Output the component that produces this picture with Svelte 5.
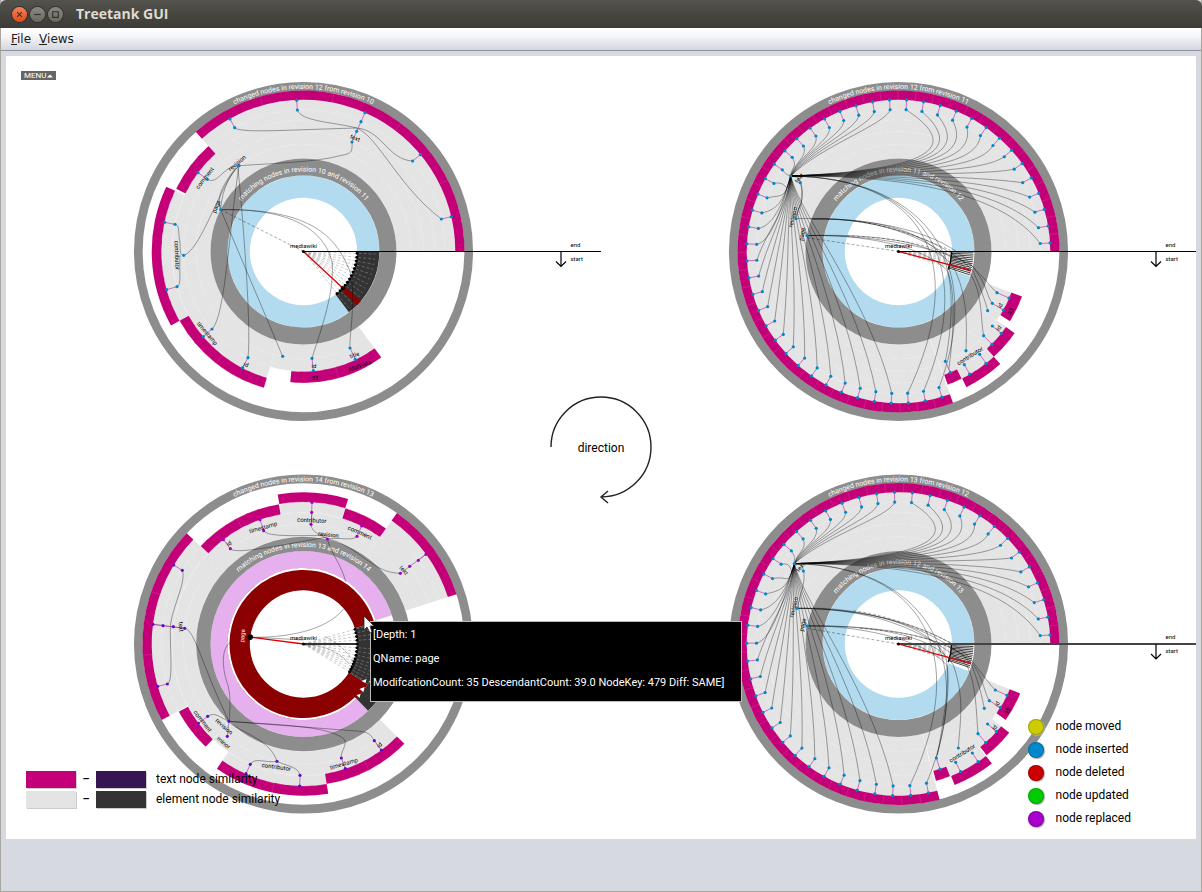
<script>
  const R = (k) => Math.sqrt(2880 * k);
  const rad = (a) => (a * Math.PI) / 180;
  const pt = (r, a) => [r * Math.cos(rad(a)), r * Math.sin(rad(a))];
  const f = (n) => n.toFixed(2);

  function sector(r0, r1, a0, a1) {
    const large = a1 - a0 > 180 ? 1 : 0;
    const [ax, ay] = pt(r1, a0);
    const [bx, by] = pt(r1, a1);
    const [cx, cy] = pt(r0, a1);
    const [dx, dy] = pt(r0, a0);
    return `M${f(ax)},${f(ay)}A${f(r1)},${f(r1)} 0 ${large} 1 ${f(bx)},${f(by)}L${f(cx)},${f(cy)}A${f(r0)},${f(r0)} 0 ${large} 0 ${f(dx)},${f(dy)}Z`;
  }

  function arc(r, a0, a1) {
    const [ax, ay] = pt(r, a0);
    const [bx, by] = pt(r, a1);
    return `M${f(ax)},${f(ay)}A${r},${r} 0 ${a1 - a0 > 180 ? 1 : 0} 1 ${f(bx)},${f(by)}`;
  }

  // Chart drawings are plotted on a grid three times finer than the view box.
  const at = (x, y, c) => [(x - 535.5) / 3, (y - c) / 3];
  const path = (d, c) =>
    d.replace(/(-?[\d.]+),(-?[\d.]+)/g, (_, x, y) => {
      const [px, py] = at(+x, +y, c);
      return `${f(px)},${f(py)}`;
    });

  const MAG = '#c40078';
  const GREY = '#e4e4e4';
  const DARK = '#333333';
  const BLUE = '#b2dbef';

  function fan(hub, c, step, count, base) {
    const lines = [];
    const stems = [];
    const dots = [];
    const hx = hub[0];
    const hy = hub[1];
    for (let i = 0; i < count; i++) {
      const a = base - step * (i + 0.5);
      const inner = pt(R(7), a);
      const outer = pt(R(8), a);
      const x = inner[0] * 3 + 535.5;
      const y = inner[1] * 3 + c;
      dots.push(inner, outer);
      stems.push([...inner, ...outer]);
      let c1, c2;
      if (a > 270) {
        const t = (a - 270) / 90;
        c1 = [720 + 130 * t, hy - 95 + 150 * t];
        c2 = [650 - 90 * t, hy - 20 + 20 * t];
      } else if (a > 180) {
        if (y < hy) {
          const q = pt(R(6) - 4, a);
          c1 = [q[0] * 3 + 520, q[1] * 3 + c];
          c2 = [hx + (x - hx) * 0.3, hy + (y - hy) * 0.45];
        } else {
          c1 = [x + 50, y - 10];
          c2 = [hx - 20, hy + 70];
        }
      } else if (a > 90) {
        c1 = [x + (hx - x) * 0.25 + 12, y - (y - hy) * 0.42];
        c2 = [hx - 6 + (x - hx) * 0.12, hy + 120];
      } else {
        c1 = [x * 0.5 + 475, 560];
        c2 = [600, hy + 5];
      }
      lines.push(`M${x},${y}C${c1[0]},${c1[1]} ${c2[0]},${c2[1]} ${hx},${hy}`);
    }
    return { lines, stems, dots };
  }

  const fan12 = fan([212, 318], 544.5, 6.44, 45, 360);
  const fan13 = fan([223, 296], 537, 6.78, 42, 360);

  const range = (n) => Array.from({ length: n }, (_, i) => i);

  const charts = [
    {
      name: 'Revision 11', c: 544.5, top: -195.5, rows: 392, ring: [2, 3], ink: '#000', weight: 1, dot: '#0088cc',
      outerLabel: 'changed nodes in revision 12 from revision 10',
      innerLabel: 'matching nodes in revision 10 and revision 11', rl: 80,
      segs: [
        [3, 5, 53.7, 106.2, GREY], [3, 6, 106.2, 228, GREY], [6, 7, 150.8, 205.3, GREY], [3, 8, 228, 360, GREY],
        [8, 9, 228, 360, MAG], [6, 7, 206.2, 228, MAG], [7, 8, 150.8, 205.3, MAG], [6, 7, 106.2, 150.8, MAG], [5, 6, 53.7, 95.8, MAG],
        [1, 2, 53.3, 360, BLUE], [1, 2, 0, 53.3, DARK]
      ],
      red: [40.7, 45.2],
      ticks: [[8, 9, 254.4], [8, 9, 280.8], [8, 9, 307.2], [8, 9, 333.6], [6, 7, 127.9], [5, 6, 74.5]],
      nodes: [2, 6.2, 10.3, 14.4, 18.5, 22.6, 26.8, 30.9, 35, 39, 47, 51.3], big: 43,
      spokes: true,
      stems: ['315,147 329,173', '515,91 517,120', '720,128 695,184', '886,254 863,273', '979,440 949,447', '219,308 247,328', '119,457 150,463', '125,659 156,650', '235,800 261,777', '353,893 369,863', '561,865 565,902', '675,834 691,868'],
      dots: '315,147 329,173 515,91 517,120 720,128 708,155 695,184 681,216 886,254 863,273 979,440 949,447 219,308 247,328 342,287 287,419 119,457 150,463 125,659 156,650 176,556 235,800 261,777 353,893 369,863 473,859 561,865 565,902 675,834 691,868',
      lines: [
        'M329,173C345,190 480,180 695,174', 'M517,120C530,155 620,155 695,174', 'M695,174C770,180 790,270 863,273', 'M695,174C760,200 820,350 949,447',
        'M695,184L681,216C682,250 680,250 640,258C580,275 450,280 342,287', 'M342,287C290,290 280,345 247,328', 'M342,287C290,330 230,540 176,556',
        'M150,463C165,465 158,480 165,520C166,545 165,556 176,556', 'M156,650C170,645 162,610 165,556', 'M342,287C310,500 300,740 261,777', 'M338,287C350,400 380,760 369,863',
        'M342,287C300,330 290,380 287,419', 'M332,293C290,350 275,380 287,419', 'M287,419L473,859', 'M287,419C500,415 600,480 622,580C628,680 580,800 561,865', 'M287,419C560,415 640,500 680,620C690,720 672,800 675,834'
      ],
      dashes: ['M287,419L535,544'],
      labels: [['text', 688, 210, 22], ['revision', 340, 284, -40], ['comment', 244, 328, -52], ['page', 280, 412, -68], ['contributor', 150, 556, 88], ['timestamp', 242, 794, 50], ['id', 361, 890, 20], ['id', 567, 893, 0], ['33', 570, 930, 0], ['title', 690, 861, -18], ['AltaVista', 706, 893, -20]]
    },
    {
      name: 'Revision 12', c: 544.5, top: -195.5, rows: 392, ring: [2, 3], ink: '#000', weight: 1, dot: '#0088cc',
      outerLabel: 'changed nodes in revision 12 from revision 11',
      innerLabel: 'matching nodes in revision 11 and revision 12', rl: 80,
      segs: [
        [3, 5, 20, 35, GREY], [3, 6, 35, 70, GREY], [6, 7, 47.9, 63.6, GREY], [3, 8, 70.2, 360, GREY],
        [8, 9, 70.2, 360, MAG], [5, 6, 20, 32, MAG], [6, 7, 35.1, 47.8, MAG], [7, 8, 47.9, 63.4, MAG], [6, 7, 63.6, 69.7, MAG],
        [1, 2, 19, 360, BLUE], [1, 2, 0, 19, '#fff']
      ],
      ticks: range(44).map((i) => [8, 9, 360 - 6.44 * (i + 1)]),
      nodes: [], hatch: 13, redLine: 14.6,
      fan: fan12,
      stems: ['831,668 867,684', '817,700 850,720', '817,768 844,790', '791,797 816,823', '779,853 798,880', '733,884 749,912', '676,874 691,907'],
      dots: '212,318 241,338 228,446 261,497 831,668 867,684 817,700 850,720 803,722 817,768 844,790 791,797 816,823 738,842 779,853 798,880 733,884 749,912 676,874 691,907',
      lines: [
        'M212,318L235,322C255,360 240,370 245,400C235,420 228,430 228,446', 'M241,338C255,390 245,380 230,440',
        'M261,497C500,490 750,560 767,600C800,630 810,650 831,668', 'M275,447C500,445 700,500 765,600C800,640 800,680 817,700', 'M275,447C480,440 690,520 760,605C780,650 795,690 803,722',
        'M275,447C500,440 640,520 740,595C790,660 780,740 791,797', 'M261,497C400,492 640,500 700,590C745,680 740,770 738,842', 'M228,446C470,440 600,480 670,560C710,660 690,800 676,874', 'M261,497C400,492 600,520 680,600C710,660 700,800 686,900'
      ],
      dashes: ['M261,503L535,544', 'M380,497C520,505 640,520 740,580', 'M400,452C520,470 600,500 700,545'],
      labels: [['text', 242, 328, -50], ['revision', 224, 443, -76], ['page', 252, 494, -78], ['id', 846, 710, -62], ['33', 878, 727, -62], ['id', 841, 778, -52], ['contributor', 753, 863, -32]]
    },
    {
      name: 'Revision 14', c: 537, top: -196, rows: 391, ring: [3, 4], ink: '#333', weight: 2, dot: '#a400cc',
      outerLabel: 'changed nodes in revision 14 from revision 13',
      innerLabel: 'matching nodes in revision 13 and revision 14', rl: 97,
      segs: [
        [4, 6, 44.7, 133.6, GREY], [6, 7, 80.6, 124.8, GREY], [4, 6, 133.6, 305.5, GREY], [6, 8, 151.8, 223.5, GREY], [6, 7, 260.2, 287.1, GREY], [4, 8, 305.5, 342, GREY],
        [8, 9, 305.5, 342, MAG], [6, 7, 287.2, 305.5, MAG], [7, 8, 260.2, 287.1, MAG], [6, 7, 223.6, 260, MAG], [8, 9, 151.8, 223.5, MAG], [6, 7, 133.6, 151.5, MAG], [7, 8, 80.6, 124.8, MAG], [6, 7, 44.7, 80.6, MAG],
        [2, 3, 46, 342, '#e6b0ef'], [2, 3, 30, 46, DARK], [1, 2, 32, 343, '#8b0000'], [1, 2, -17, 32, DARK]
      ],
      ticks: [[6, 7, 242], [8, 9, 199], [8, 9, 176], [7, 8, 102], [6, 7, 62.5]],
      nodes: [-16, -12, -8, -4, 0, 4, 8, 12, 16, 19, 22, 25, 28, 31], halo: true,
      spokes: true,
      stems: ['295,224 316,251', '405,164 416,197', '561,112 559,178', '710,183 696,214', '903,268 880,286', '146,300 172,316', '84,478 178,490', '98,664 127,657', '220,775 248,754', '363,926 376,898', '525,931 524,962', '649,879 661,911', '748,827 769,855'],
      dots: '295,224 316,251 405,164 416,197 561,112 560,142 558,178 607,222 710,183 696,214 903,268 880,286 854,304 826,325',
      dots2: '146,300 172,316 84,478 114,482 145,485 179,490 98,664 127,657 220,775 248,754 307,814 312,769 363,926 376,898 456,889 525,931 524,963 649,879 661,911 748,827 769,855',
      lines: [
        'M316,251C330,270 470,240 607,216', 'M416,197C430,218 520,210 607,212', 'M558,178C560,205 590,210 607,222', 'M696,214C680,230 640,215 607,222', 'M607,222C700,240 740,325 826,325L903,268',
        'M607,222C620,270 650,300 662,350', 'M656,432C600,500 480,518 376,517', 'M561,142L558,178', 'M172,316C185,350 140,430 136,485C135,560 145,650 127,657', 'M84,478L179,490C210,495 230,600 312,769',
        'M316,531C290,550 290,600 305,650C318,680 316,730 312,769', 'M312,769C280,755 270,740 248,754', 'M312,769L307,814', 'M300,755C320,800 430,810 456,889', 'M376,898C390,875 420,895 456,889C490,905 520,905 525,931',
        'M312,769C450,780 600,780 655,820C672,835 645,860 649,879', 'M312,769L680,797C730,800 735,805 748,827'
      ],
      dashes: ['M600,515C650,540 675,570 690,600', 'M545,540C620,540 660,580 685,610'],
      labels: [['id', 315, 241, -32], ['timestamp', 416, 193, -16], ['contributor', 560, 172, 3], ['revision', 610, 215, 6], ['comment', 702, 208, 24], ['text', 832, 320, 50], ['text', 162, 486, 86], ['comment', 228, 772, 52], ['revision', 293, 789, 42], ['minor', 292, 838, 40], ['contributor', 453, 912, 8], ['timestamp', 658, 902, -16], ['id', 767, 845, -40]],
      redHub: true
    },
    {
      name: 'Revision 13', c: 537, top: -196, rows: 391, ring: [2, 3], ink: '#444', weight: 2, dot: '#0088cc',
      outerLabel: 'changed nodes in revision 13 from revision 12',
      innerLabel: 'matching nodes in revision 12 and revision 13', rl: 80,
      segs: [
        [3, 5, 22.1, 38.7, GREY], [3, 6, 38.7, 75, GREY], [6, 7, 52, 68.5, GREY], [3, 8, 75.2, 360, GREY],
        [8, 9, 75.2, 360, MAG], [5, 6, 22.1, 35.3, MAG], [6, 7, 38.7, 51.6, MAG], [7, 8, 52, 68.3, MAG], [6, 7, 68.7, 74.7, MAG],
        [1, 2, 21, 360, BLUE], [1, 2, 0, 21, '#fff']
      ],
      ticks: range(41).map((i) => [8, 9, 360 - 6.78 * (i + 1)]),
      nodes: [], hatch: 14, redLine: 15,
      fan: fan13,
      stems: ['826,675 861,691', '808,707 841,727', '803,777 829,799', '774,806 797,833', '757,864 774,890', '707,892 722,920', '649,879 660,912'],
      dots: '223,296 250,318 231,430 262,483 826,675 861,691 808,707 841,727 793,730 803,777 829,799 774,806 797,833 715,849 757,864 774,890 707,892 722,920 649,879 660,912',
      lines: [
        'M223,296L245,300C262,335 245,370 240,400L231,430', 'M231,430C500,430 720,520 765,600C790,630 810,660 826,675', 'M262,483C500,480 700,520 760,600C790,640 795,690 808,707', 'M231,430C480,420 690,520 755,600C775,650 785,690 793,730',
        'M231,430C500,430 640,520 740,600C770,660 768,740 774,806', 'M262,483C420,480 640,500 700,600C735,700 720,770 715,849', 'M231,430C450,430 620,480 675,570C700,650 670,800 649,879', 'M262,483C400,480 610,520 680,600C690,660 665,800 652,870'
      ],
      dashes: ['M262,490L535,537', 'M420,490C520,498 640,510 740,575', 'M400,437C520,455 600,490 700,537'],
      labels: [['text', 246, 310, -50], ['revision', 227, 428, -76], ['page', 254, 481, -78], ['id', 837, 720, -62], ['35', 868, 741, -62], ['id', 828, 791, -52], ['contributor', 730, 870, -32]]
    }
  ];

  const pts = (s, c) => s.split(' ').map((p) => at(...p.split(',').map(Number), c));

  const legend = [
    ['node moved', '#cccc00'], ['node inserted', '#0088cc'], ['node deleted', '#cc0000'], ['node updated', '#00cc00'], ['node replaced', '#a800cc']
  ];
</script>

<div class="window">
  <header class="titlebar">
    <button class="wb close" aria-label="Close">
      <svg viewBox="0 0 16 16"><path d="M5.5 5.5l5 5M10.5 5.5l-5 5" /></svg>
    </button>
    <button class="wb" aria-label="Minimize">
      <svg viewBox="0 0 16 16"><path d="M4.5 8h7" /></svg>
    </button>
    <button class="wb" aria-label="Maximize">
      <svg viewBox="0 0 16 16"><path d="M5 5h6v6h-6z" /></svg>
    </button>
    <h1>Treetank GUI</h1>
  </header>
  <nav class="menubar">
    <button><u>F</u>ile</button>
    <button><u>V</u>iews</button>
  </nav>

  <main class="canvas">
    <div class="grid">
      {#each charts as ch, n}
        <svg class="chart" viewBox="-297.5 {ch.top} 595 {ch.rows}" role="img" aria-label={ch.name}>
          <circle r="165.2" fill="none" stroke="#8d8d8d" stroke-width="8.7" />
          {#each ch.segs as s}
            <path d={sector(R(s[0]), R(s[1]), s[2], s[3] - 0.01)} fill={s[4]} />
          {/each}
          {#if ch.halo}
            <path d={arc(75, 46, 343)} fill="none" stroke="#fff" stroke-width="2" />
          {/if}
          {#each ch.ticks as t}
            <line x1={pt(R(t[0]), t[2])[0]} y1={pt(R(t[0]), t[2])[1]} x2={pt(R(t[1]), t[2])[0]} y2={pt(R(t[1]), t[2])[1]} stroke="#d24a9c" stroke-width="0.4" />
          {/each}
          {#each [4, 5, 6, 7] as k}
            <circle r={R(k)} fill="none" stroke="#fff" stroke-opacity="0.4" stroke-width="0.6" stroke-dasharray="9 3" />
          {/each}
          <circle r={(R(ch.ring[0]) + R(ch.ring[1])) / 2} fill="none" stroke="#8d8d8d" stroke-width={R(ch.ring[1]) - R(ch.ring[0])} />

          <path id="outer{n}" d={arc(162.5, 180, 359.9)} fill="none" />
          <path id="inner{n}" d={arc(ch.rl, 180, 359.9)} fill="none" />
          <text class="ringtext"><textPath href="#outer{n}" startOffset="50%">{ch.outerLabel}</textPath></text>
          <text class="ringtext"><textPath href="#inner{n}" startOffset="50%">{ch.innerLabel}</textPath></text>

          {#if ch.red}
            <path d={sector(R(1), R(2), ch.red[0], ch.red[1])} fill="#8b0000" />
          {/if}
          {#if ch.spokes}
            {#each ch.nodes as a}
              <line x2={pt(72, a)[0]} y2={pt(72, a)[1]} stroke="#999" stroke-width="0.5" stroke-dasharray="3 2" />
            {/each}
          {/if}
          {#if ch.hatch}
            {#each range(ch.hatch) as i}
              {@const a = ((i + 0.4) * 19) / ch.hatch}
              <line x1={pt(53, a)[0]} y1={pt(53, a)[1]} x2={pt(75, a)[0]} y2={pt(75, a)[1]} stroke="#111" stroke-width="0.8" />
              <line x2={pt(51, a)[0]} y2={pt(51, a)[1]} stroke="#aaa" stroke-width="0.5" stroke-dasharray="3 2" />
            {/each}
            <path d={arc(53, 0, 20)} fill="none" stroke="#111" stroke-width="1.5" />
          {/if}

          {#each ch.lines as l}
            <path class="rel" d={path(l, ch.c)} />
          {/each}
          {#each ch.dashes as l}
            <path class="rel dash" d={path(l, ch.c)} />
          {/each}
          {#if ch.fan}
            {#each ch.fan.lines as l}
              <path class="rel" d={path(l, ch.c)} />
            {/each}
            {#each ch.fan.stems as s}
              <line class="stem" x1={s[0]} y1={s[1]} x2={s[2]} y2={s[3]} />
            {/each}
            {#each ch.fan.dots as d}
              <circle cx={d[0]} cy={d[1]} r="1.6" fill={ch.dot} />
            {/each}
          {/if}
          {#each ch.stems as s}
            {@const q = pts(s, ch.c)}
            <line class="stem" x1={q[0][0]} y1={q[0][1]} x2={q[1][0]} y2={q[1][1]} />
          {/each}

          <line x2="297.5" stroke={ch.ink} stroke-width={ch.weight} />
          {#each ch.nodes as a}
            <circle cx={pt(R(1), a)[0]} cy={pt(R(1), a)[1]} r="1.5" />
          {/each}
          {#if ch.big}
            <line x2={pt(R(1), ch.big)[0]} y2={pt(R(1), ch.big)[1]} stroke="#d40000" stroke-width="1.3" />
            <circle cx={pt(R(1), ch.big)[0]} cy={pt(R(1), ch.big)[1]} r="2.2" />
          {/if}
          {#if ch.redLine}
            <line x2={pt(75, ch.redLine)[0]} y2={pt(75, ch.redLine)[1]} stroke="#d40000" stroke-width="1.2" />
          {/if}
          {#if ch.redHub}
            <path d="M0,0L-53.3,-6.9" stroke="#e00000" stroke-width="1.4" />
            <circle cx="-53.3" cy="-6.9" r="2.8" />
            <path class="rel" d="M-53,-7L0,-4" />
            <path d="M58,37l5,-2l-1,4zM56,45l5,-2l-1,5zM53,51l4,-1l-1,4z" fill="#fff" />
            <text class="lab white" transform="translate(-59,-8) rotate(-85)">page</text>
          {/if}
          {#each pts(ch.dots, ch.c) as d}
            <circle cx={d[0]} cy={d[1]} r="1.6" fill={ch.dot} />
          {/each}
          {#if ch.dots2}
            {#each pts(ch.dots2, ch.c) as d}
              <circle cx={d[0]} cy={d[1]} r="1.6" fill="#5a0fd0" />
            {/each}
          {/if}
          {#each ch.labels as l}
            {@const p = at(l[1], l[2], ch.c)}
            <text class="lab" transform="translate({f(p[0])},{f(p[1])}) rotate({l[3]})">{l[0]}</text>
          {/each}
          <circle r="1.6" />
          <text class="lab" y="-4">mediawiki</text>
          <text class="small" x="267" y="-5">end</text>
          <text class="small" x="267" y="9">start</text>
          <path d="M257.5,0V15M252.5,10L257.5,15L262.5,10" fill="none" stroke="#000" stroke-width="1.2" />
        </svg>
      {/each}
    </div>

    <button class="menutag">MENU<svg viewBox="0 0 6 4"><path d="M0 3.5h6L3 .5z" /></svg></button>

    <div class="direction">
      <svg viewBox="0 0 104 112">
        <path d="M2,52A50,50 0 1 1 52,102M59,96L52,102L59,108" />
      </svg>
      <span>direction</span>
    </div>

    <div class="similarity">
      <i style="background:#c40078"></i><b>–</b><i style="background:#371452"></i><span>text node similarity</span>
      <i style="background:#e4e4e4"></i><b>–</b><i style="background:#333333"></i><span>element node similarity</span>
    </div>

    <ul class="legend">
      {#each legend as [label, colour]}
        <li><i style="background:{colour}"></i>{label}</li>
      {/each}
    </ul>

    <div class="tooltip">
      <p>[Depth: 1</p>
      <p>QName: page</p>
      <p>ModifcationCount: 35 DescendantCount: 39.0 NodeKey: 479 Diff: SAME]</p>
    </div>
    <svg class="cursor" viewBox="0 0 12 19"><path d="M1 1v14l3-3 3 6 2-1-2-6h4z" /></svg>
  </main>
</div>

<style>
  :global(body) { margin: 0; background: #d6d9e0; }
  .window {
    min-height: 100vh;
    box-sizing: border-box;
    border: 1px solid #a9a69f;
    border-top: 0;
    background: #d6d9e0;
    font-family: Roboto, "Liberation Sans", sans-serif;
    color: #000;
  }
  button { border: 0; padding: 0; background: none; font: inherit; color: inherit; }
  .titlebar {
    display: flex;
    align-items: center;
    height: 28px;
    margin: 0 -1px;
    padding-left: 12px;
    gap: 3px;
    box-sizing: border-box;
    background: linear-gradient(#53524c, #3c3b37);
    border-radius: 6px 6px 0 0;
  }
  .wb {
    width: 15px;
    height: 15px;
    border-radius: 50%;
    background: linear-gradient(#8b8982, #6a6862);
    box-shadow: 0 0 0 1px #33322e;
  }
  .wb.close { background: linear-gradient(#f5825b, #df4a16); }
  .wb svg { display: block; width: 15px; height: 15px; fill: none; stroke: #33322e; stroke-width: 1.2; }
  h1 { margin: 0 0 0 10px; font: bold 14px/20px "Open Sans", sans-serif; color: #dfdbd2; }
  .menubar {
    display: flex;
    gap: 8px;
    height: 22px;
    padding-left: 10px;
    background: linear-gradient(#fff, #f4f5f8 40%, #d3d6de);
    border-bottom: 1px solid #8d919d;
    font: 12px/22px "DejaVu Sans", sans-serif;
    color: #1c1c1c;
  }
  .canvas { position: relative; margin: 5px; background: #fff; overflow: hidden; }
  .grid { display: grid; grid-template-columns: 1fr 1fr; }
  .chart { display: block; width: 100%; }
  .rel { fill: none; stroke: #000; stroke-opacity: 0.7; stroke-width: 0.5; }
  .dash { stroke-dasharray: 3 2; }
  .stem { stroke: #c43a98; stroke-width: 0.7; }
  .ringtext { font-size: 7px; fill: #fff; text-anchor: middle; }
  .lab { font-size: 6px; text-anchor: middle; }
  .white { fill: #fff; }
  .small { font-size: 6px; }
  .menutag {
    position: absolute;
    left: 15px;
    top: 15px;
    display: flex;
    align-items: center;
    gap: 1px;
    padding: 0 3px;
    background: #666;
    color: #fff;
    font-size: 8px;
    line-height: 9px;
  }
  .menutag svg { width: 6px; height: 4px; fill: #fff; }
  .direction {
    position: absolute;
    left: 50%;
    top: 339px;
    width: 104px;
    margin-left: -52px;
    text-align: center;
    font-size: 12px;
  }
  .direction svg { display: block; fill: none; stroke: #222; stroke-width: 1.4; }
  .direction span { position: absolute; inset: 44px 0 auto; line-height: 18px; }
  .similarity {
    position: absolute;
    left: 20px;
    bottom: 31px;
    display: grid;
    grid-template-columns: 50px 20px 50px auto;
    align-items: center;
    row-gap: 2px;
    font-size: 12px;
    line-height: 18px;
  }
  .similarity i { height: 17px; box-shadow: 1px 1px 0 #ccc; }
  .similarity b { text-align: center; font-size: 11px; }
  .similarity span { padding-left: 10px; }
  .legend {
    position: absolute;
    right: 65px;
    bottom: 9px;
    margin: 0;
    padding: 0;
    list-style: none;
    font-size: 12px;
    line-height: 23px;
  }
  .legend li { display: flex; align-items: center; gap: 12px; }
  .legend i { width: 16px; height: 16px; border-radius: 50%; box-shadow: inset 0 0 0 1px rgba(0, 0, 0, 0.2), 1px 1px 1px #aaa; }
  .tooltip {
    position: absolute;
    left: 364px;
    top: 565px;
    padding: 1px 17px 6px 2px;
    border: 1px solid #bbb;
    background: #000;
    color: #fff;
    font-size: 11px;
    line-height: 24px;
    white-space: nowrap;
  }
  .tooltip p { margin: 0; }
  .cursor { position: absolute; left: 357px; top: 559px; width: 12px; height: 19px; fill: #fff; stroke: #222; stroke-width: 0.8; }
</style>
